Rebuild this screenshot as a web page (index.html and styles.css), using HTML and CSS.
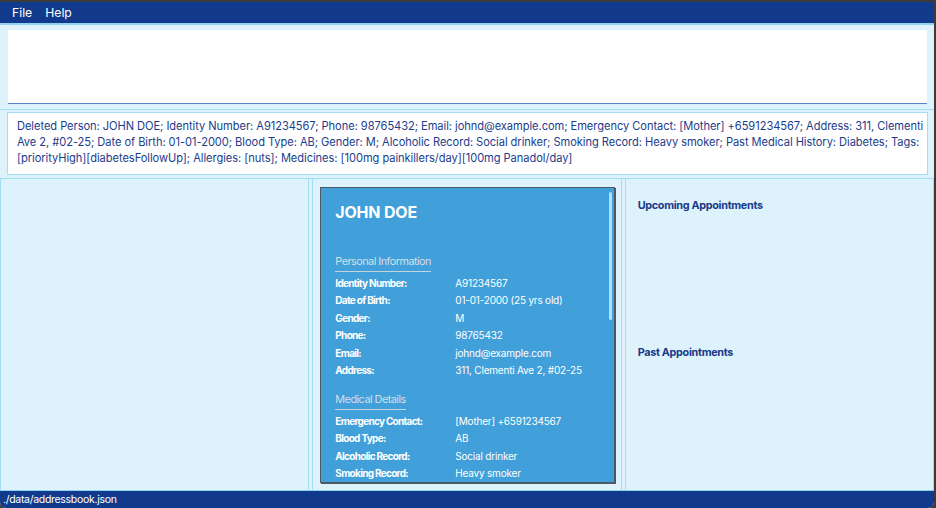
FILE: index.html
```html
<!DOCTYPE html>
<html>
<head>
<meta charset="utf-8">
<link rel="stylesheet" href="styles.css">
</head>
<body>
<div class="app">
  <div class="menubar"><span class="menu-item">File</span><span class="menu-item">Help</span></div>
  <div class="cmd-area"><div class="cmd-box"></div></div>
  <div class="result-area">
    <div class="result-box">Deleted Person: JOHN DOE; Identity Number: A91234567; Phone: 98765432; Email: johnd@example.com; Emergency Contact: [Mother] +6591234567; Address: 311, Clementi Ave 2, #02-25; Date of Birth: 01-01-2000; Blood Type: AB; Gender: M; Alcoholic Record: Social drinker; Smoking Record: Heavy smoker; Past Medical History: Diabetes; Tags: [priorityHigh][diabetesFollowUp]; Allergies: [nuts]; Medicines: [100mg painkillers/day][100mg Panadol/day]</div>
  </div>
  <div class="panels">
    <div class="panel"></div>
    <div class="panel panel-mid">
      <div class="card">
        <div class="card-scroll">
          <div class="card-name">JOHN DOE</div>
          <div class="section-title first">Personal Information</div>
          <div class="rows">
            <div class="label">Identity Number:</div><div class="value">A91234567</div>
            <div class="label">Date of Birth:</div><div class="value">01-01-2000 (25 yrs old)</div>
            <div class="label">Gender:</div><div class="value">M</div>
            <div class="label">Phone:</div><div class="value">98765432</div>
            <div class="label">Email:</div><div class="value">johnd@example.com</div>
            <div class="label">Address:</div><div class="value">311, Clementi Ave 2, #02-25</div>
          </div>
          <div class="section-title">Medical Details</div>
          <div class="rows">
            <div class="label">Emergency Contact:</div><div class="value">[Mother] +6591234567</div>
            <div class="label">Blood Type:</div><div class="value">AB</div>
            <div class="label">Alcoholic Record:</div><div class="value">Social drinker</div>
            <div class="label">Smoking Record:</div><div class="value">Heavy smoker</div>
          </div>
        </div>
        <div class="scrollbar"></div>
      </div>
    </div>
    <div class="panel panel-right">
      <div class="appt-title">Upcoming Appointments</div>
      <div class="appt-title past">Past Appointments</div>
    </div>
  </div>
  <div class="status">./data/addressbook.json</div>
</div>
</body>
</html>
```
FILE: styles.css
```css
html, body {
  margin: 0;
  padding: 0;
  background: #3a3a3a;
  width: 936px;
  height: 508px;
  overflow: hidden;
}
body {
  font-family: Inter, "Noto Sans", sans-serif;
}
.app {
  margin-top: 2px;
  width: 934px;
  height: 506px;
  background: #def2fc;
  display: flex;
  flex-direction: column;
  border-bottom-left-radius: 6px;
  border-bottom-right-radius: 6px;
  overflow: hidden;
}
.menubar {
  height: 21px;
  background: #123a8c;
  border-bottom: 2px solid #8fd3f0;
  display: flex;
  align-items: center;
  padding-left: 12px;
  gap: 13px;
  flex: none;
}
.menu-item {
  color: #ffffff;
  font-size: 12.2px;
}
.cmd-area {
  padding: 5px 7px 5px 8px;
  border-bottom: 1px solid #a3def4;
  flex: none;
}
.cmd-box {
  height: 73px;
  background: #ffffff;
  border-bottom: 1px solid #5b80cc;
}
.result-area {
  padding: 2px 6px 3px 7px;
  border-bottom: 1px solid #a3def4;
  flex: none;
}
.result-box {
  background: #ffffff;
  border: 1px solid #a3def4;
  padding: 5px 3px 7px 9px;
  height: 49px;
  color: #1b3c8c;
  font-size: 11.1px;
  line-height: 16px;
  letter-spacing: -0.05px;
}
.panels {
  flex: 1;
  display: grid;
  grid-template-columns: 1fr 1fr 1fr;
  gap: 3px;
  min-height: 0;
}
.panel {
  border: 1px solid #a3def4;
  border-top: none;
  border-bottom: none;
  min-width: 0;
  min-height: 0;
}
.panel-mid {
  padding: 8px 6px 7px 7px;
  display: flex;
}
.card {
  flex: 1;
  background: #41a0da;
  border: 1px solid #4d5a66;
  box-shadow: 1px 1px 0 #4d5a66;
  position: relative;
  overflow: hidden;
}
.card-scroll {
  padding: 14px 14px 0 14px;
  color: #ffffff;
}
.card-name {
  font-size: 16px;
  font-weight: 700;
  line-height: 20px;
  letter-spacing: -0.2px;
}
.section-title {
  display: inline-block;
  font-size: 10.8px;
  line-height: 14px;
  color: #d3dfe9;
  padding-bottom: 2px;
  border-bottom: 1px solid #c3d3df;
  margin-top: 14px;
  margin-bottom: 2px;
  letter-spacing: -0.5px;
}
.section-title.first {
  margin-top: 33px;
}
.rows {
  display: grid;
  grid-template-columns: 120px 1fr;
  grid-auto-rows: 17.5px;
  align-items: center;
  font-size: 10px;
}
.label {
  font-weight: 700;
  letter-spacing: -0.7px;
}
.value {
  letter-spacing: -0.2px;
}
.scrollbar {
  position: absolute;
  top: 4px;
  right: 2px;
  width: 3px;
  height: 128px;
  border-radius: 2px;
  background: #a8e2f6;
}
.panel-right {
  padding: 20px 12px;
}
.appt-title {
  font-size: 10.8px;
  font-weight: 700;
  color: #173a8a;
  line-height: 14px;
  letter-spacing: -0.3px;
}
.appt-title.past {
  margin-top: 133px;
}
.status {
  height: 17px;
  flex: none;
  background: #123a8c;
  border-top: 1px solid #8fd3f0;
  color: #ffffff;
  font-size: 10.5px;
  line-height: 17px;
  padding-left: 3px;
  letter-spacing: -0.3px;
}
```
